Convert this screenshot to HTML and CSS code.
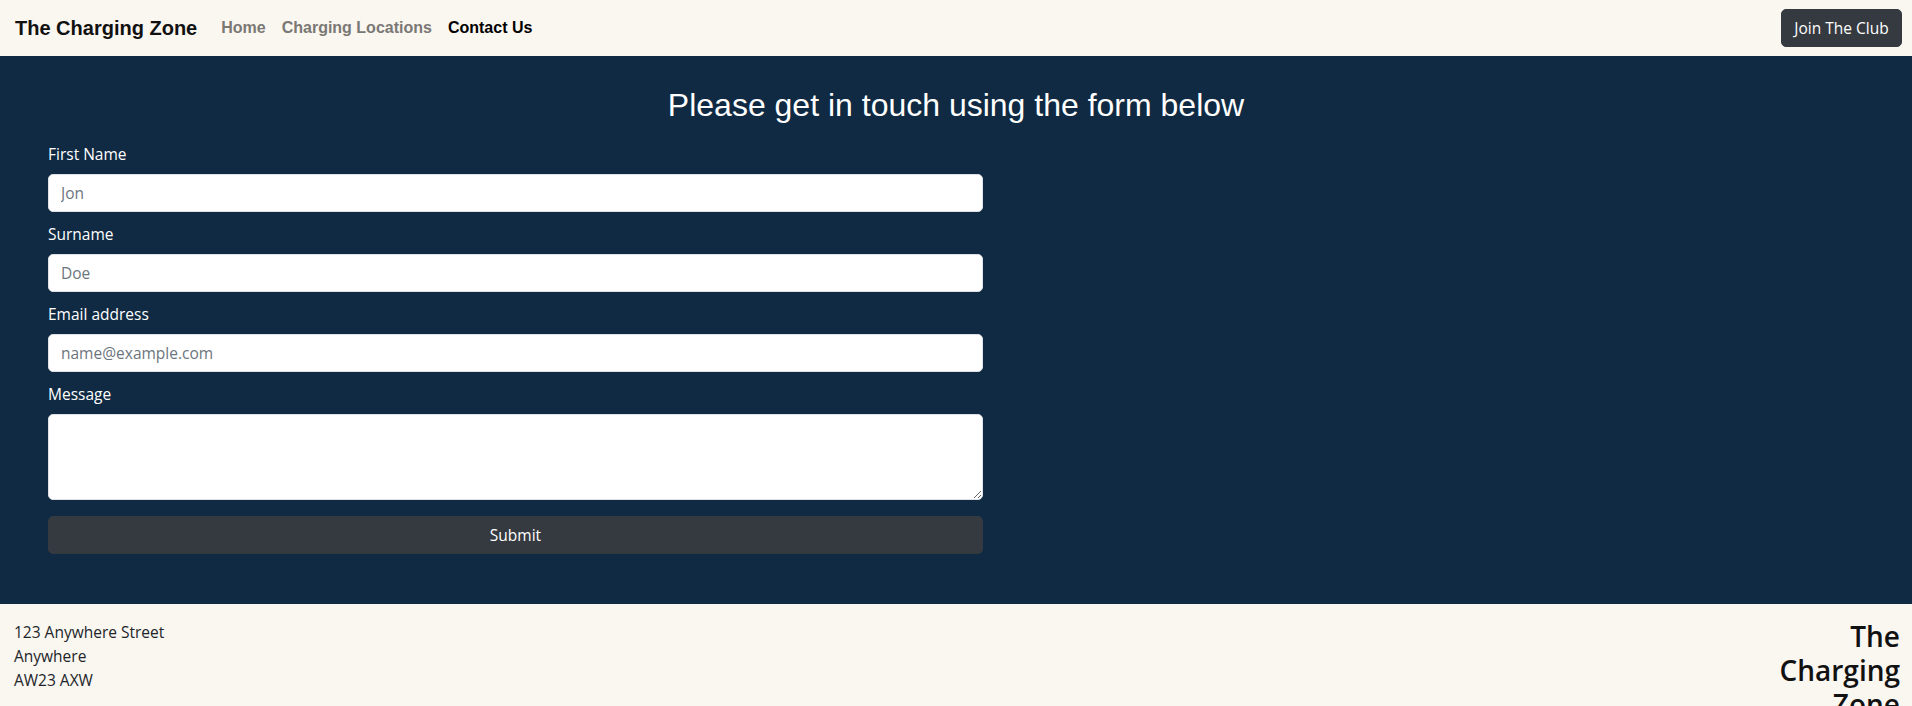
FILE: index.html
```html
<!DOCTYPE html>
<html lang="en">
<head>
<meta charset="utf-8">
<title>Contact Us - The Charging Zone</title>
<link rel="stylesheet" href="styles.css">
</head>
<body>
<nav class="navbar">
  <div class="nav-left">
    <a class="brand" href="#">The Charging Zone</a>
    <ul class="nav-links">
      <li><a class="nav-link" href="#">Home</a></li>
      <li><a class="nav-link" href="#">Charging Locations</a></li>
      <li><a class="nav-link active" href="#">Contact Us</a></li>
    </ul>
  </div>
  <button class="btn btn-join" type="button">Join The Club</button>
</nav>

<main class="contact">
  <h2 class="contact-title">Please get in touch using the form below</h2>
  <form class="contact-form">
    <div class="field">
      <label class="field-label" for="fname">First Name</label>
      <input class="field-input" id="fname" type="text" placeholder="Jon">
    </div>
    <div class="field">
      <label class="field-label" for="sname">Surname</label>
      <input class="field-input" id="sname" type="text" placeholder="Doe">
    </div>
    <div class="field">
      <label class="field-label" for="email">Email address</label>
      <input class="field-input" id="email" type="email" placeholder="name@example.com">
    </div>
    <div class="field field-last">
      <label class="field-label" for="msg">Message</label>
      <textarea class="field-input field-textarea" id="msg" rows="3"></textarea>
    </div>
    <button class="btn btn-submit" type="submit">Submit</button>
  </form>
</main>

<footer class="footer">
  <address class="footer-address">
    123 Anywhere Street<br>
    Anywhere<br>
    AW23 AXW
  </address>
  <div class="footer-brand">
    <h3 class="footer-title">The Charging Zone</h3>
  </div>
</footer>
</body>
</html>
```

FILE: styles.css
```css
* { box-sizing: border-box; }

html, body {
  margin: 0;
  padding: 0;
}

body {
  font-family: "Open Sans", "Noto Sans", sans-serif;
  font-size: 15.5px;
  line-height: 1.5;
  color: #212529;
  background: #faf6f0;
}

/* Navbar */
.navbar {
  display: flex;
  align-items: center;
  justify-content: space-between;
  height: 56px;
  padding: 0 10px 0 15px;
  background: #faf6f0;
  font-family: "Liberation Sans", Arial, sans-serif;
}

.nav-left {
  display: flex;
  align-items: center;
}

.brand {
  font-size: 20px;
  line-height: 30px;
  font-weight: 700;
  color: #111;
  text-decoration: none;
  margin-right: 16px;
}

.nav-links {
  display: flex;
  list-style: none;
  margin: 0;
  padding: 0;
}

.nav-link {
  display: block;
  padding: 8px;
  font-size: 16px;
  line-height: 24px;
  font-weight: 700;
  color: #7a7874;
  text-decoration: none;
}

.nav-link.active {
  color: #000;
}

.btn {
  font-family: "Open Sans", "Noto Sans", sans-serif;
  font-size: 15.5px;
  line-height: 24px;
  color: #fff;
  background: #343a40;
  border: 1px solid #343a40;
  border-radius: 5px;
  padding: 6px 12px;
  cursor: pointer;
}

.btn-join {
  width: 121px;
  padding: 6px 0;
}

/* Contact section */
.contact {
  background: #0f2a42;
  padding: 30px 48px 50px;
}

.contact-title {
  margin: 0 0 18px;
  text-align: center;
  font-family: "Liberation Sans", Arial, sans-serif;
  font-size: 32px;
  font-weight: 400;
  line-height: 1.2;
  color: #fff;
}

.contact-form {
  width: 935px;
  display: flex;
  flex-direction: column;
}

.field {
  display: flex;
  flex-direction: column;
  margin-bottom: 10px;
}

.field-last {
  margin-bottom: 16px;
}

.field-label {
  color: #fff;
  font-size: 15.5px;
  line-height: 24px;
  margin-bottom: 8px;
}

.field-input {
  font-family: "Open Sans", "Noto Sans", sans-serif;
  font-size: 15.5px;
  line-height: 24px;
  height: 38px;
  padding: 6px 12px;
  color: #212529;
  background: #fff;
  border: 1px solid #dee2e6;
  border-radius: 5px;
}

.field-input::placeholder {
  color: #6c757d;
}

.field-textarea {
  height: 86px;
  resize: vertical;
}

.btn-submit {
  width: 100%;
  height: 38px;
}

/* Footer */
.footer {
  display: flex;
  justify-content: space-between;
  align-items: flex-start;
  padding: 16px 12px;
  background: #faf6f0;
}

.footer-address {
  font-style: normal;
  margin: 0;
  line-height: 24px;
  padding-left: 2px;
}

.footer-brand {
  width: 135px;
}

.footer-title {
  margin: 0;
  text-align: right;
  font-size: 28px;
  font-weight: 600;
  line-height: 1.2;
  color: #111;
}
```
